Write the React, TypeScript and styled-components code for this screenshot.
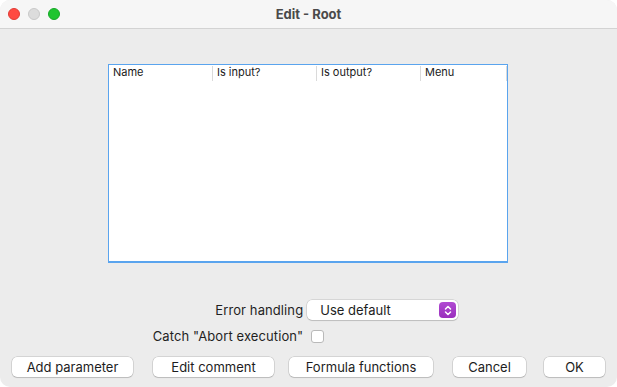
import * as React from 'react';
import styled, { createGlobalStyle } from 'styled-components';

const GlobalStyle = createGlobalStyle`
  html, body {
    margin: 0;
    padding: 0;
    background: #ffffff;
  }
  body {
    font-family: Inter, "Liberation Sans", Arial, sans-serif;
    color: #1d1d1d;
  }
`;

const Window = styled.div`
  width: 617px;
  height: 387px;
  display: flex;
  flex-direction: column;
  background: #ececec;
  border-radius: 10px;
  overflow: hidden;
`;

const TitleBar = styled.div`
  position: relative;
  height: 28px;
  flex-shrink: 0;
  display: flex;
  align-items: center;
  justify-content: center;
  background: #f6f6f6;
  border-bottom: 1px solid #d3d3d3;
`;

const Lights = styled.div`
  position: absolute;
  left: 8px;
  top: 8px;
  display: flex;
  gap: 8px;
`;

const Light = styled.span<{ $color: string; $edge: string }>`
  width: 12px;
  height: 12px;
  box-sizing: border-box;
  border-radius: 50%;
  background: ${(p) => p.$color};
  border: 0.5px solid ${(p) => p.$edge};
`;

const Title = styled.div`
  font-size: 13px;
  font-weight: 700;
  color: #4a4a4a;
`;

const Body = styled.div`
  flex: 1;
  display: flex;
  flex-direction: column;
  padding: 35px 12px 10px;
`;

const Table = styled.div`
  align-self: center;
  width: 400px;
  height: 199px;
  box-sizing: border-box;
  background: #ffffff;
  border: 1px solid #5aa4ee;
  border-bottom-width: 2px;
  margin-left: -1px;
`;

const HeaderRow = styled.div`
  display: flex;
  height: 15px;
  padding-top: 1px;
`;

const HeaderCell = styled.div`
  width: 104px;
  box-sizing: border-box;
  padding-left: 4px;
  font-size: 11px;
  line-height: 13px;
  color: #1a1a1a;
  border-right: 1px solid #dadada;
  &:last-child {
    width: 86px;
  }
`;

const Form = styled.div`
  margin-top: 37px;
  display: grid;
  grid-template-columns: auto 151px;
  justify-content: center;
  column-gap: 4px;
  row-gap: 8px;
  align-items: center;
  padding-right: 6px;
`;

const Label = styled.div`
  font-size: 13px;
  letter-spacing: 0.1px;
  text-align: right;
  color: #1f1f1f;
  white-space: nowrap;
`;

const Select = styled.div`
  height: 20px;
  box-sizing: border-box;
  display: flex;
  align-items: center;
  justify-content: space-between;
  padding: 0 2px 0 13px;
  background: #ffffff;
  border-radius: 5px;
  box-shadow: 0 0 0 0.5px rgba(0, 0, 0, 0.18), 0 1px 1px rgba(0, 0, 0, 0.12);
  font-size: 13px;
`;

const Stepper = styled.span`
  width: 17px;
  height: 16px;
  border-radius: 4px;
  background: linear-gradient(#b04ad2, #9a2fbd);
  display: flex;
  align-items: center;
  justify-content: center;
`;

const CheckRow = styled.div`
  height: 16px;
  display: flex;
  align-items: center;
`;

const Check = styled.span`
  width: 13px;
  height: 13px;
  box-sizing: border-box;
  margin-left: 4px;
  background: #ffffff;
  border: 1px solid #b9b9b9;
  border-radius: 3px;
`;

const ButtonBar = styled.div`
  margin-top: 13px;
  display: flex;
`;

const Button = styled.button<{ $w: number; $gap: number }>`
  width: ${(p) => p.$w}px;
  height: 20px;
  margin-left: ${(p) => p.$gap}px;
  padding: 0;
  background: #ffffff;
  border: none;
  border-radius: 5px;
  box-shadow: 0 0 0 0.5px rgba(0, 0, 0, 0.2), 0 1px 1px rgba(0, 0, 0, 0.12);
  font-family: inherit;
  font-size: 13px;
  color: #1d1d1d;
`;

const columns = ['Name', 'Is input?', 'Is output?', 'Menu'];

const buttons: [string, number, number][] = [
  ['Add parameter', 121, 0],
  ['Edit comment', 121, 20],
  ['Formula functions', 144, 15],
  ['Cancel', 73, 20],
  ['OK', 61, 18],
];

const App = (): JSX.Element => (
  <>
    <GlobalStyle />
    <Window>
      <TitleBar>
        <Lights>
          <Light $color="#ff4a42" $edge="#e03c35" />
          <Light $color="#dcdcdc" $edge="#c8c8c8" />
          <Light $color="#1ec530" $edge="#17a828" />
        </Lights>
        <Title>Edit - Root</Title>
      </TitleBar>
      <Body>
        <Table>
          <HeaderRow>
            {columns.map((c) => (
              <HeaderCell key={c}>{c}</HeaderCell>
            ))}
          </HeaderRow>
        </Table>
        <Form>
          <Label>Error handling</Label>
          <Select>
            <span>Use default</span>
            <Stepper>
              <svg width="8" height="11" viewBox="0 0 8 11" fill="none">
                <path d="M1.5 4 L4 1.5 L6.5 4" stroke="#fff" strokeWidth="1.5" strokeLinecap="round" strokeLinejoin="round" />
                <path d="M1.5 7 L4 9.5 L6.5 7" stroke="#fff" strokeWidth="1.5" strokeLinecap="round" strokeLinejoin="round" />
              </svg>
            </Stepper>
          </Select>
          <Label>Catch "Abort execution"</Label>
          <CheckRow>
            <Check />
          </CheckRow>
        </Form>
        <ButtonBar>
          {buttons.map(([label, w, gap]) => (
            <Button key={label} $w={w} $gap={gap}>
              {label}
            </Button>
          ))}
        </ButtonBar>
      </Body>
    </Window>
  </>
);

export default App;
